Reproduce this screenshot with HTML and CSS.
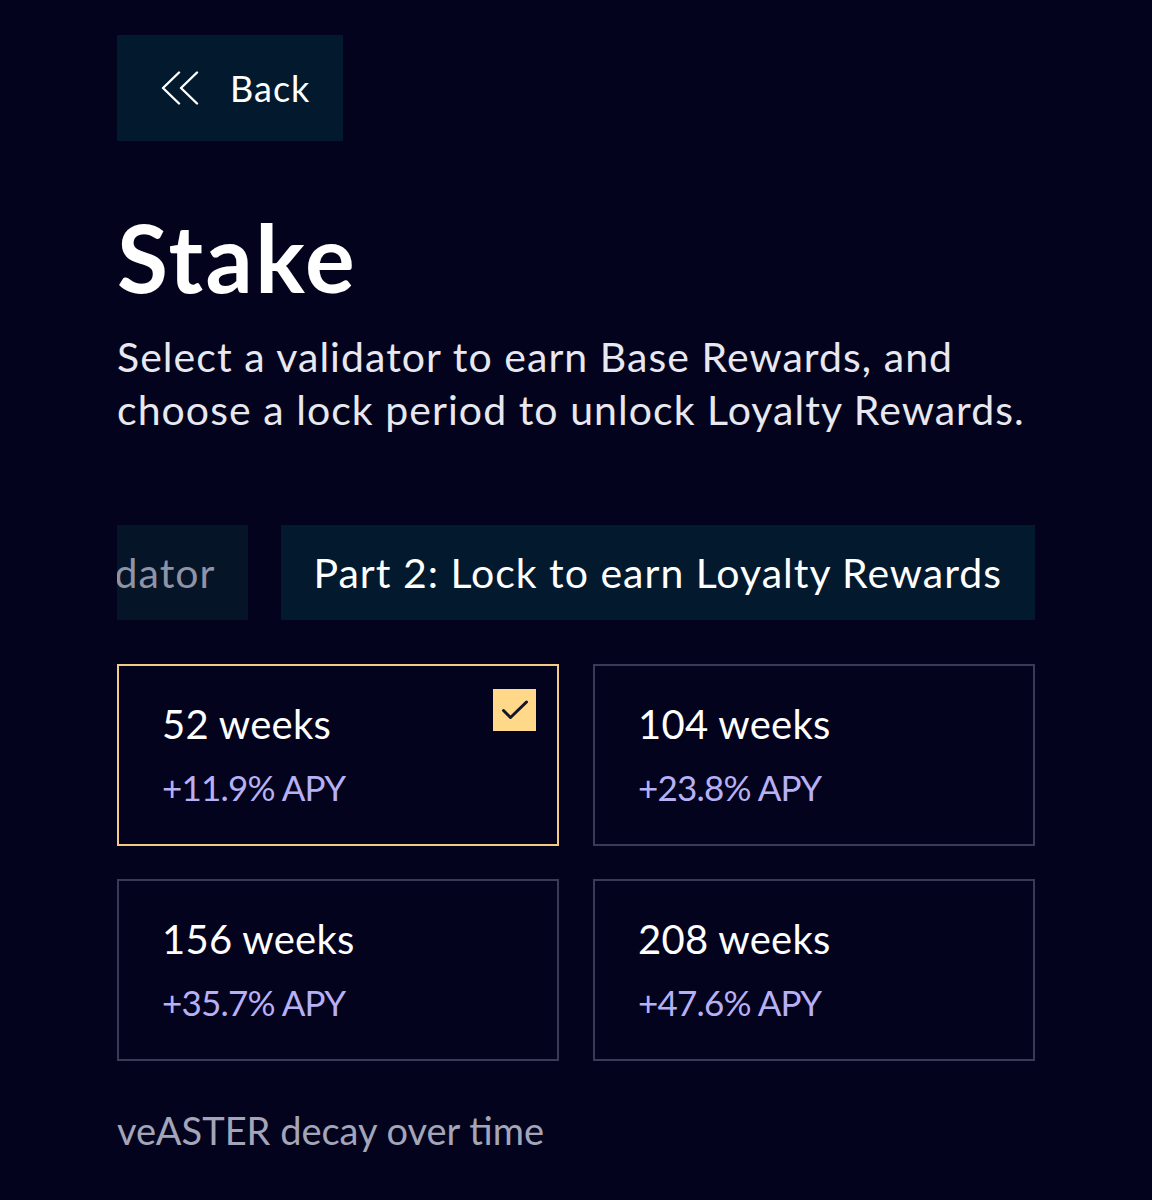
FILE: index.html
```html
<!DOCTYPE html>
<html lang="en">
<head>
<meta charset="utf-8">
<link rel="stylesheet" href="styles.css">
</head>
<body>
<main class="page">
  <button class="back">
    <svg class="back-icon" viewBox="0 0 38 34" width="38" height="34" aria-hidden="true">
      <path d="M18 1.5 L2 17 L18 32.5" fill="none" stroke="#ffffff" stroke-width="2.4" stroke-linecap="round" stroke-linejoin="round"/>
      <path d="M36 1.5 L20 17 L36 32.5" fill="none" stroke="#ffffff" stroke-width="2.4" stroke-linecap="round" stroke-linejoin="round"/>
    </svg>
    <span>Back</span>
  </button>

  <h1 class="title">Stake</h1>
  <p class="lead">Select a validator to earn Base Rewards, and choose a lock period to unlock Loyalty Rewards.</p>

  <div class="tabs">
    <div class="tab tab-muted">Part 1: Select a validator</div>
    <div class="tab tab-active">Part 2: Lock to earn Loyalty Rewards</div>
  </div>

  <div class="options">
    <div class="option selected">
      <div class="weeks">52 weeks</div>
      <div class="apy">+11.9% APY</div>
      <span class="check">
        <svg viewBox="0 0 28 28" width="28" height="28" aria-hidden="true">
          <path d="M2.5 14.5 L9.5 21.5 L25.5 6" fill="none" stroke="#14142a" stroke-width="3" stroke-linecap="round" stroke-linejoin="round"/>
        </svg>
      </span>
    </div>
    <div class="option">
      <div class="weeks">104 weeks</div>
      <div class="apy">+23.8% APY</div>
    </div>
    <div class="option">
      <div class="weeks">156 weeks</div>
      <div class="apy">+35.7% APY</div>
    </div>
    <div class="option">
      <div class="weeks">208 weeks</div>
      <div class="apy">+47.6% APY</div>
    </div>
  </div>

  <p class="note">veASTER decay over time</p>
</main>
</body>
</html>
```

FILE: styles.css
```css
* { box-sizing: border-box; }

html, body {
  margin: 0;
  padding: 0;
  background: #03031e;
}

body {
  font-family: "Lato", "Noto Sans", sans-serif;
  color: #ffffff;
  height: 1200px;
  overflow: hidden;
}

.page {
  width: 918px;
  margin-left: 117px;
  padding-top: 35px;
}

.back {
  display: flex;
  align-items: center;
  gap: 31px;
  height: 106px;
  width: 226px;
  padding: 0 0 0 44px;
  background: #031a2e;
  border: none;
  color: #ffffff;
  font-family: inherit;
  font-size: 36px;
  letter-spacing: 1px;
  font-weight: 400;
  cursor: pointer;
}

.back-icon {
  width: 38px;
  height: 34px;
  flex: none;
}

.title {
  margin: 70px 0 0;
  font-size: 93px;
  font-weight: 700;
  line-height: 1;
  letter-spacing: 2.5px;
}

.lead {
  margin: 26px 0 0;
  font-size: 41px;
  line-height: 53px;
  letter-spacing: 1.05px;
  font-weight: 400;
  color: #e8e8f0;
}

.tabs {
  margin-top: 89px;
  display: flex;
  justify-content: flex-end;
  gap: 33px;
  overflow: hidden;
}

.tab {
  flex: none;
  height: 95px;
  display: flex;
  align-items: center;
  padding: 0 33px 0 32px;
  font-size: 41px;
  letter-spacing: 1px;
  white-space: nowrap;
}

.tab-muted {
  background: #061428;
  color: #8f93a6;
}

.tab-active {
  background: #031a2e;
  color: #ffffff;
}

.options {
  margin-top: 44px;
  display: grid;
  grid-template-columns: 1fr 1fr;
  column-gap: 34px;
  row-gap: 33px;
}

.option {
  position: relative;
  height: 182px;
  border: 2px solid #3a3a57;
  padding: 34px 0 0 43px;
}

.option.selected {
  border-color: #f3cb84;
}

.weeks {
  font-size: 40px;
  line-height: 48px;
  letter-spacing: 0.3px;
  color: #ffffff;
}

.apy {
  margin-top: 17px;
  font-size: 35px;
  line-height: 44px;
  letter-spacing: -0.8px;
  color: #b8b0f5;
}

.check {
  position: absolute;
  top: 23px;
  right: 21px;
  width: 43px;
  height: 42px;
  background: #ffd88a;
  display: flex;
  align-items: center;
  justify-content: center;
}

.note {
  margin: 47px 0 0;
  font-size: 38px;
  line-height: 44px;
  color: #a3a6b8;
}
```
